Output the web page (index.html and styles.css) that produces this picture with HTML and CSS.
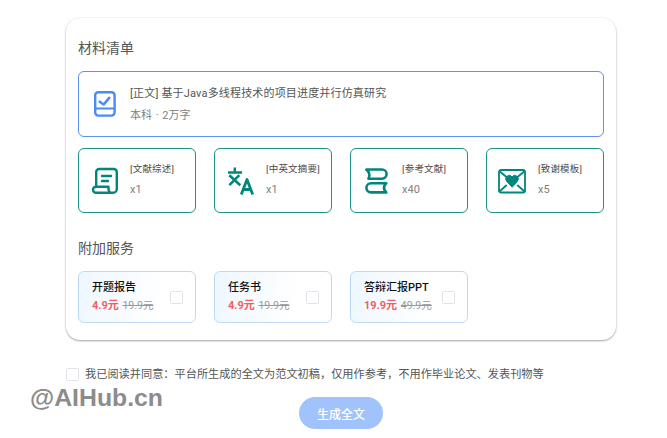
FILE: index.html
```html
<!DOCTYPE html>
<html lang="zh">
<head>
<meta charset="utf-8">
<title>材料清单</title>
<link rel="stylesheet" href="styles.css">
</head>
<body>
<main class="page">
  <section class="panel">
    <h2 class="heading">材料清单</h2>
    <div class="main-item">
      <svg class="icon-main" viewBox="0 0 22 26" fill="none" stroke="#4a8bf5" stroke-width="2.400" stroke-linecap="round" stroke-linejoin="round">
        <rect x="1.200" y="1.200" width="19.400" height="23.400" rx="3"/>
        <path d="M1.200 17.600H20.600" stroke-width="2"/>
        <path d="M5.700 10.700l4 2.800 5.500-6.600" stroke-width="2.600"/>
      </svg>
      <div class="main-text">
        <div class="main-title">[正文] 基于Java多线程技术的项目进度并行仿真研究</div>
        <div class="main-sub">本科 · 2万字</div>
      </div>
    </div>
    <div class="grid materials">
      <div class="mat">
        <svg class="icon-mat" viewBox="0 0 26 26" fill="none" stroke="#00877c" stroke-width="2.400" stroke-linecap="round" stroke-linejoin="round">
          <path d="M4.200 18V4a3 3 0 0 1 3-3H21.800a3 3 0 0 1 3 3v17a3.800 3.800 0 0 1-3.800 3.800H4a3 3 0 0 1-3-3 3 3 0 0 1 3-3h12.500V21a3.800 3.800 0 0 0 3.800 3.800"/>
          <path d="M10 8h9M10 13h6"/>
        </svg>
        <div class="mat-text"><div class="mat-name">[文献综述]</div><div class="mat-count">x1</div></div>
      </div>
      <div class="mat">
        <svg class="icon-mat" viewBox="0 0 26 26" fill="none" stroke="#00877c" stroke-width="2.400" stroke-linejoin="round">
          <path d="M0 4.500H14M6.800 -0.500V4.500"/>
          <path d="M1.300 7.200L12.300 17.200M11.300 7.200L1.300 17.200" stroke-width="2.600"/>
          <path d="M13.300 26.500L19 11.500l5.700 15M15.200 21.500H22.800" stroke-width="2.800"/>
        </svg>
        <div class="mat-text"><div class="mat-name">[中英文摘要]</div><div class="mat-count">x1</div></div>
      </div>
      <div class="mat">
        <svg class="icon-mat" viewBox="0 0 26 26" fill="none" stroke="#00877c" stroke-width="2.600" stroke-linejoin="round" stroke-linecap="round">
          <path d="M2.300 1.500H18a4.600 4.600 0 0 1 0 9.200H4.500c1.500-3 1.200-6.500-2.200-9.200z"/>
          <path d="M22.300 15.200H7a4.600 4.600 0 0 0 0 9.200H22.300c-3-3-3-6.200 0-9.200z"/>
        </svg>
        <div class="mat-text"><div class="mat-name">[参考文献]</div><div class="mat-count">x40</div></div>
      </div>
      <div class="mat">
        <svg class="icon-mat" viewBox="0 0 26 26" fill="none" stroke="#00877c" stroke-width="1.800" stroke-linecap="round" stroke-linejoin="round">
          <rect x="-1" y="2" width="26" height="22.500" rx="2"/>
          <path d="M-0.500 3.200L6.800 9.200M24.500 3.200L17.200 9.200M-0.500 23.500L6.200 17.500M24.500 23.500L17.800 17.500"/>
          <path d="M12 19L6.500 13.200a3.500 3.500 0 0 1 5.500-4.400 3.500 3.500 0 0 1 5.500 4.400z" fill="#00877c" stroke-width="1"/>
        </svg>
        <div class="mat-text"><div class="mat-name">[致谢模板]</div><div class="mat-count">x5</div></div>
      </div>
    </div>
    <h2 class="heading heading-extra">附加服务</h2>
    <div class="grid services">
      <label class="svc">
        <span class="svc-text"><span class="svc-name">开题报告</span><span class="svc-price"><b>4.9元</b> <s>19.9元</s></span></span>
        <span class="box"></span>
      </label>
      <label class="svc">
        <span class="svc-text"><span class="svc-name">任务书</span><span class="svc-price"><b>4.9元</b> <s>19.9元</s></span></span>
        <span class="box"></span>
      </label>
      <label class="svc">
        <span class="svc-text"><span class="svc-name">答辩汇报PPT</span><span class="svc-price"><b>19.9元</b> <s>49.9元</s></span></span>
        <span class="box"></span>
      </label>
    </div>
  </section>
  <div class="agree"><span class="box"></span><span class="agree-text">我已阅读并同意：平台所生成的全文为范文初稿，仅用作参考，不用作毕业论文、发表刊物等</span></div>
  <div class="actions"><button class="submit" type="button">生成全文</button></div>
</main>
<div class="watermark">@AIHub.cn</div>
</body>
</html>
```
FILE: styles.css
```css
* { box-sizing: border-box; }
html, body { margin: 0; height: 100%; overflow: hidden; }
body {
  background: #fff;
  font-family: Roboto, "Noto Sans CJK SC", sans-serif;
  color: #333;
  position: relative;
}
.page { padding: 18px 51px 0 66px; }
.panel {
  height: 322px;
  padding: 20px 12px 0;
  background: #fff;
  border-radius: 14px;
  box-shadow: 0 1px 2px 0 rgba(90, 95, 110, 0.55), 0 0 2px rgba(120, 125, 140, 0.12);
}
.heading {
  margin: 0;
  font-size: 14px;
  line-height: 20px;
  font-weight: 400;
  color: #555;
}
.heading-extra { margin-top: 25px; }
.main-item {
  margin-top: 13px;
  height: 66px;
  display: flex;
  align-items: center;
  padding-left: 15px;
  border: 1px solid #5b93ee;
  border-radius: 6px;
}
.icon-main { width: 22px; height: 26px; flex: none; }
.main-text { margin-left: 14px; margin-top: 2px; }
.main-title { font-size: 11px; line-height: 16px; color: #555; letter-spacing: 0.17px; }
.main-sub { margin-top: 6px; font-size: 11px; line-height: 16px; color: #808080; word-spacing: 1px; }
.grid {
  display: grid;
  grid-template-columns: repeat(4, 118px);
  column-gap: 18px;
}
.materials { margin-top: 11px; }
.mat {
  height: 65px;
  display: flex;
  align-items: center;
  padding-left: 13px;
  border: 1px solid #1f9288;
  border-radius: 6px;
}
.icon-mat { width: 26px; height: 26px; flex: none; overflow: visible; }
.mat-text { margin-left: 12px; margin-top: -3px; }
.mat-name { font-size: 9.500px; line-height: 14px; color: #4a4a4a; white-space: nowrap; letter-spacing: 0.2px; }
.mat-count { margin-top: 7px; font-size: 11px; line-height: 14px; color: #808080; }
.services { margin-top: 13px; }
.svc {
  height: 52px;
  display: flex;
  align-items: center;
  justify-content: space-between;
  padding: 0 12px 0 13px;
  border: 1px solid #bcdaf6;
  border-radius: 6px;
  background: linear-gradient(100deg, #eef7ff 0%, #fff 70%);
}
.svc-text { display: flex; flex-direction: column; margin-top: -1px; }
.svc-name { font-size: 11px; line-height: 15px; color: #111; font-weight: 500; }
.svc-price { margin-top: 3px; font-size: 10.500px; line-height: 15px; color: #999; white-space: nowrap; }
.svc-price b { color: #ee5f5f; font-size: 11px; font-weight: 700; }
.svc-price s { color: #999; margin-left: 1px; }
.box {
  width: 13px;
  height: 13px;
  flex: none;
  background: #fff;
  border: 1px solid #e2e3ea;
  border-radius: 2px;
}
.agree {
  margin-top: 26px;
  display: flex;
  align-items: center;
  gap: 6px;
  font-size: 11.200px;
  line-height: 14px;
  color: #555;
  white-space: nowrap;
}
.agree-text { padding-top: 2px; }
.actions { display: flex; justify-content: center; margin-top: 15px; }
.submit {
  width: 84px;
  height: 32px;
  border: none;
  border-radius: 16px;
  background: #a0c3fb;
  color: #fff;
  font: 500 12px "Noto Sans CJK SC", sans-serif;
}
.watermark {
  position: absolute;
  left: 30px;
  top: 383px;
  font-family: "Liberation Sans", sans-serif;
  font-size: 24.800px;
  line-height: 30px;
  font-weight: 700;
  color: #8c8c8c;
}
```
